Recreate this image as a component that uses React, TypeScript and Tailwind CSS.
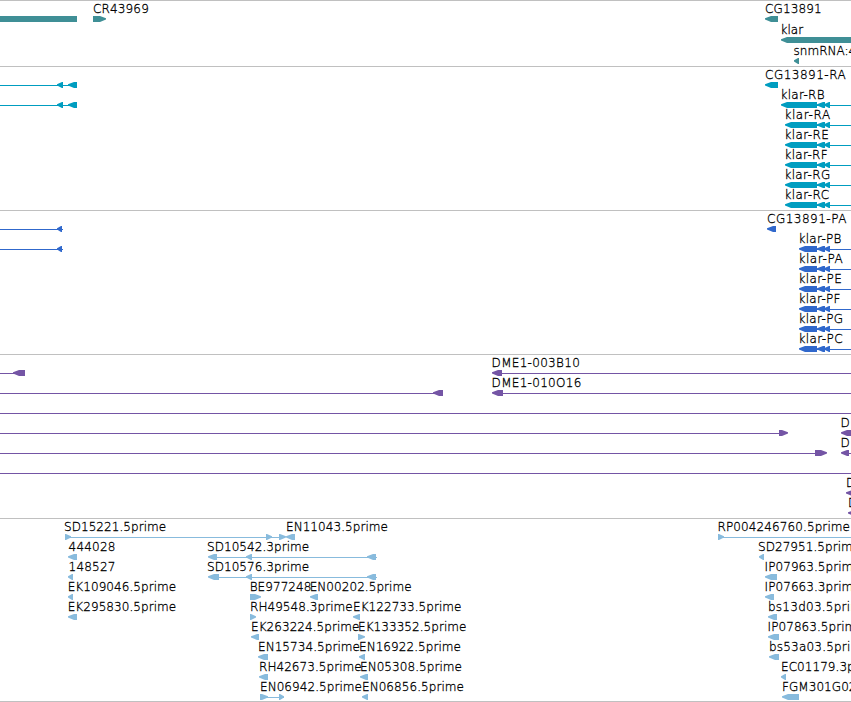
type Direction = 'left' | 'right' | 'none';

interface Exon {
  start: number;
  end: number;
  dir: Direction;
}

interface Feature {
  row: number;
  label?: string;
  labelX?: number;
  // letter spacing of the label, in pixels
  spacing?: number;
  line?: [number, number];
  exons: Exon[];
}

interface Track {
  name: string;
  color: string;
  height: number;
  rowHeight: number;
  features: Feature[];
}

const VIEW_WIDTH = 851;
const BAR_TOP = 15;

const left = (start: number, end: number): Exon => ({ start, end, dir: 'left' });
const right = (start: number, end: number): Exon => ({
  start,
  end,
  dir: 'right',
});

const named = (
  row: number,
  label: string,
  labelX: number,
  exons: Exon[],
  line?: [number, number],
  spacing = 0.06,
): Feature => ({ row, label, labelX, exons, line, spacing });

const klar = (
  row: number,
  suffix: string,
  start: number,
  spacing: number,
): Feature =>
  named(
    row,
    `klar-${suffix}`,
    start - 0.6,
    [left(start, 817), left(817, 825), left(824, 830)],
    [start + 4, 860],
    spacing,
  );

const tracks: Track[] = [
  {
    name: 'gene',
    color: '#3f8f96',
    height: 65,
    rowHeight: 21,
    features: [
      { row: 0, exons: [{ start: 0, end: 77, dir: 'none' }] },
      named(0, 'CR43969', 93, [right(93, 106)], undefined, 0.15),
      named(0, 'CG13891', 765, [left(765, 778)], undefined, 0.15),
      named(1, 'klar', 780.4, [left(781, 860)]),
      named(2, 'snmRNA:4', 793.6, [left(794, 799)], undefined, 0),
    ],
  },
  {
    name: 'transcript',
    color: '#009dc0',
    height: 143,
    rowHeight: 20,
    features: [
      { row: 0, line: [0, 77], exons: [left(57, 63), left(68, 77)] },
      { row: 1, line: [0, 77], exons: [left(57, 63), left(68, 77)] },
      named(0, 'CG13891-RA', 765, [left(765, 778)], undefined, 0.5),
      klar(1, 'RB', 781, 0.3),
      klar(2, 'RA', 785, 0.6),
      klar(3, 'RE', 785, 0.4),
      klar(4, 'RF', 785, 0.3),
      klar(5, 'RG', 785, 0.35),
      klar(6, 'RC', 785, 0.4),
    ],
  },
  {
    name: 'cds',
    color: '#3068cc',
    height: 143,
    rowHeight: 20,
    features: [
      { row: 0, line: [0, 63], exons: [left(57, 62)] },
      { row: 1, line: [0, 63], exons: [left(57, 62)] },
      named(0, 'CG13891-PA', 767, [left(767, 776)], undefined, 0.5),
      klar(1, 'PB', 799, 0.3),
      klar(2, 'PA', 799, 0.6),
      klar(3, 'PE', 799, 0.4),
      klar(4, 'PF', 799, 0.3),
      klar(5, 'PG', 799, 0.35),
      klar(6, 'PC', 799, 0.4),
    ],
  },
  {
    name: 'bac',
    color: '#7455a5',
    height: 163,
    rowHeight: 20,
    features: [
      { row: 0, line: [0, 16], exons: [left(13, 25)] },
      named(0, 'DME1-003B10', 491.6, [left(492, 502)], [496, 860], 0.3),
      { row: 1, line: [0, 437], exons: [left(433, 443)] },
      named(1, 'DME1-010O16', 491.6, [left(492, 503)], [496, 860], 0.3),
      { row: 2, line: [0, 860], exons: [] },
      { row: 3, line: [0, 785], exons: [right(779, 788)] },
      named(3, 'D', 840.6, [left(841, 860)]),
      { row: 4, line: [0, 823], exons: [right(815, 827)] },
      named(4, 'D', 840.6, [left(841, 849)], [845, 860]),
      { row: 5, line: [0, 860], exons: [] },
      named(6, 'D', 846, [left(846, 860)]),
      named(7, 'D', 848, [left(848, 860)]),
    ],
  },
  {
    name: 'est',
    color: '#88bbdd',
    height: 182,
    rowHeight: 20,
    features: [
      named(
        0,
        'SD15221.5prime',
        64,
        [right(65, 71), right(266, 272), right(279, 286)],
        [65, 285],
      ),
      named(0, 'EN11043.5prime', 286, [left(286, 295)]),
      named(0, 'RP004246760.5prime', 717.6, [right(718, 724)], [718, 860], 0.1),
      named(1, '444028', 68.6, [left(68, 77)], undefined, 0.2),
      named(
        1,
        'SD10542.3prime',
        207,
        [left(208, 217), left(246, 252), left(367, 376)],
        [212, 377],
      ),
      named(1, 'SD27951.5prime', 758, [left(759, 764)]),
      named(2, '148527', 68.6, [left(68, 73)], undefined, 0.2),
      named(
        2,
        'SD10576.3prime',
        207,
        [left(208, 219), left(246, 252), left(367, 376)],
        [212, 377],
      ),
      named(2, 'IP07963.5prime', 764.6, [left(765, 777)]),
      named(3, 'EK109046.5prime', 67.7, [left(68, 73)]),
      named(3, 'BE977248', 249.7, [right(250, 261)]),
      named(3, 'EN00202.5prime', 309.7, [left(310, 318)]),
      named(3, 'IP07663.3prime', 764.6, [left(765, 774)]),
      named(4, 'EK295830.5prime', 67.7, [left(68, 77)]),
      named(4, 'RH49548.3prime', 250, [right(250, 256)]),
      named(4, 'EK122733.5prime', 353, [left(353, 360)]),
      named(4, 'bs13d03.5prime', 768, [left(768, 777)], undefined, 0.25),
      named(5, 'EK263224.5prime', 251, [left(251, 259)]),
      named(5, 'EK133352.5prime', 358, [right(358, 365)]),
      named(5, 'IP07863.5prime', 767.6, [left(768, 779)]),
      named(6, 'EN15734.5prime', 258, [left(258, 268)]),
      named(6, 'EN16922.5prime', 359, [left(359, 365)]),
      named(6, 'bs53a03.5prime', 769, [left(769, 779)], undefined, 0.2),
      named(7, 'RH42673.5prime', 259, [left(259, 268)]),
      named(7, 'EN05308.5prime', 360, [left(360, 368)]),
      named(7, 'EC01179.3prime', 781, [left(781, 786)]),
      named(
        8,
        'EN06942.5prime',
        260,
        [right(260, 268), right(279, 284)],
        [260, 284],
      ),
      named(8, 'EN06856.5prime', 362, [left(362, 368)]),
      named(8, 'FGM301G02', 782, [left(782, 799)]),
    ],
  },
];

function exonPoints({ start, end, dir }: Exon, top: number) {
  const bottom = top + 6;
  const head = Math.min(6, end - start - 1);
  if (dir === 'left') {
    return `${start},${top + 2.3} ${start + head},${top} ${end},${top} ${end},${bottom} ${start + head},${bottom} ${start},${top + 3.5}`;
  }
  if (dir === 'right') {
    return `${start},${top} ${end - head},${top} ${end},${top + 2.3} ${end},${top + 3.5} ${end - head},${bottom} ${start},${bottom}`;
  }
  return `${start},${top} ${end},${top} ${end},${bottom} ${start},${bottom}`;
}

function TrackRow({ track }: { track: Track }) {
  return (
    <section className="border-t border-[#c0c0c0]">
      <svg
        width={VIEW_WIDTH}
        height={track.height}
        className="block overflow-hidden"
        aria-label={track.name}
      >
        {track.features.map((feature, i) => {
          const top = BAR_TOP + feature.row * track.rowHeight;
          return (
            <g key={i} fill={track.color}>
              {feature.line && (
                <rect
                  x={feature.line[0]}
                  y={top + 3}
                  width={feature.line[1] - feature.line[0]}
                  height={1}
                />
              )}
              {feature.exons.map((exon) => (
                <polygon key={exon.start} points={exonPoints(exon, top)} />
              ))}
              {feature.label && (
                <text
                  x={feature.labelX}
                  y={top - 3}
                  letterSpacing={feature.spacing}
                  className="fill-black stroke-black stroke-[0.3px] text-[12px] font-extralight"
                >
                  {feature.label}
                </text>
              )}
            </g>
          );
        })}
      </svg>
    </section>
  );
}

export default function App() {
  return (
    <main className="w-[851px] h-[702px] overflow-hidden bg-white border-b border-[#c0c0c0] font-['DejaVu_Sans',sans-serif]">
      {tracks.map((track) => (
        <TrackRow key={track.name} track={track} />
      ))}
    </main>
  );
}
